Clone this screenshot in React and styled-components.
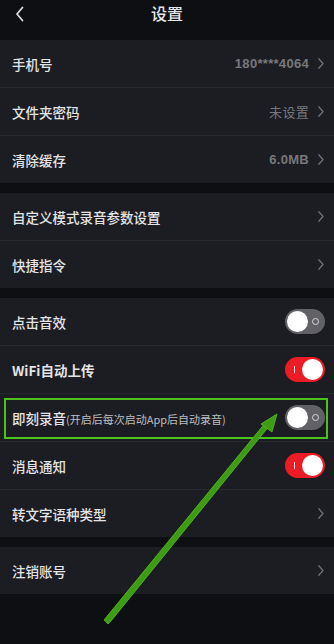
import React from "react";
import styled, { createGlobalStyle } from "styled-components";

const Global = createGlobalStyle`
  html, body { margin: 0; padding: 0; background: #0e0f13; }
  body { font-family: "Noto Sans CJK SC", "Noto Sans", sans-serif; -webkit-font-smoothing: antialiased; }
`;

const Page = styled.div`
  position: relative;
  width: 334px;
  height: 644px;
  background: #0e0f13;
  overflow: hidden;
  display: flex;
  flex-direction: column;
  gap: 10px;
`;

const Header = styled.div`
  position: relative;
  height: 40px;
  margin-bottom: -10px;
  display: flex;
  justify-content: center;
  align-items: flex-start;
  padding-top: 2px;
  box-sizing: border-box;
`;

const Back = styled.div`
  position: absolute;
  left: 15px;
  top: 6px;
  width: 10px;
  height: 16px;
  display: flex;
`;

const Title = styled.div`
  color: #e6e6e8;
  font-size: 16px;
  line-height: 22px;
  font-weight: 500;
`;

const Group = styled.div`
  background: #1c1d22;
  display: flex;
  flex-direction: column;
`;

const Row = styled.div`
  position: relative;
  height: 47px;
  display: flex;
  align-items: center;
  padding: 0 9px 0 12px;
  box-sizing: border-box;
  & + & { border-top: 1px solid #27282d; height: 48px; }
`;

const Label = styled.div`
  flex: 1;
  color: #e4e4e6;
  font-size: 13.5px;
  font-weight: ${(p) => (p.$bold ? 700 : 500)};
  white-space: nowrap;
`;

const Sub = styled.span`
  font-size: 11px;
  font-weight: 400;
  color: #bdbdc0;
`;

const Value = styled.div`
  color: #77787c;
  font-size: 13px;
  font-weight: ${(p) => (p.$bold ? 700 : 400)};
  font-family: ${(p) => (p.$bold ? '"Liberation Sans", "Noto Sans CJK SC", sans-serif' : '"Noto Sans CJK SC", sans-serif')};
  margin-right: 9px;
  letter-spacing: 0.3px;
`;

const Chev = styled.svg`
  width: 6px;
  height: 11px;
  margin-right: 1px;
  flex: none;
`;

const Toggle = styled.div`
  position: relative;
  width: 40px;
  height: 25px;
  border-radius: 13px;
  background: ${(p) => (p.$on ? "#ec1b24" : "#616166")};
  display: flex;
  align-items: center;
  justify-content: ${(p) => (p.$on ? "flex-end" : "flex-start")};
  padding: 0 2px;
  box-sizing: border-box;
  flex: none;
`;

const Knob = styled.div`
  width: 21px;
  height: 21px;
  border-radius: 50%;
  background: #ffffff;
`;

const OffMark = styled.div`
  position: absolute;
  right: 6px;
  top: 9px;
  width: 5px;
  height: 5px;
  border: 1.2px solid #d8d8da;
  border-radius: 50%;
`;

const OnMark = styled.div`
  position: absolute;
  left: 9px;
  top: 9px;
  width: 1px;
  height: 7px;
  background: #ffffff;
  opacity: 0.85;
`;

const Highlight = styled.div`
  position: absolute;
  left: 4px;
  right: 6px;
  top: 4px;
  bottom: 2px;
  border: 2px solid #4cc21c;
  pointer-events: none;
`;

const Overlay = styled.svg`
  position: absolute;
  left: 0;
  top: 0;
  width: 334px;
  height: 644px;
  pointer-events: none;
`;

const Chevron = () => (
  <Chev viewBox="0 0 6 11">
    <polyline points="0.8,0.8 5,5.5 0.8,10.2" fill="none" stroke="#6f7074" strokeWidth="1.3" strokeLinecap="round" strokeLinejoin="round" />
  </Chev>
);

const Switch = ({ on }) => (
  <Toggle $on={on}>
    {on ? <OnMark /> : <OffMark />}
    <Knob />
  </Toggle>
);

export default function App() {
  return (
    <>
      <Global />
      <Page>
        <Header>
          <Back>
            <svg width="10" height="16" viewBox="0 0 10 16">
              <polyline points="7.5,1.5 2,8 7.5,14.5" fill="none" stroke="#dcdcde" strokeWidth="1.8" strokeLinecap="round" strokeLinejoin="round" />
            </svg>
          </Back>
          <Title>设置</Title>
        </Header>

        <Group>
          <Row>
            <Label>手机号</Label>
            <Value $bold>180****4064</Value>
            <Chevron />
          </Row>
          <Row>
            <Label>文件夹密码</Label>
            <Value>未设置</Value>
            <Chevron />
          </Row>
          <Row>
            <Label>清除缓存</Label>
            <Value $bold>6.0MB</Value>
            <Chevron />
          </Row>
        </Group>

        <Group>
          <Row>
            <Label>自定义模式录音参数设置</Label>
            <Chevron />
          </Row>
          <Row>
            <Label>快捷指令</Label>
            <Chevron />
          </Row>
        </Group>

        <Group>
          <Row>
            <Label>点击音效</Label>
            <Switch on={false} />
          </Row>
          <Row>
            <Label $bold>WiFi自动上传</Label>
            <Switch on />
          </Row>
          <Row>
            <Label>
              即刻录音<Sub>(开启后每次启动App后自动录音)</Sub>
            </Label>
            <Switch on={false} />
            <Highlight />
          </Row>
          <Row>
            <Label>消息通知</Label>
            <Switch on />
          </Row>
          <Row>
            <Label>转文字语种类型</Label>
            <Chevron />
          </Row>
        </Group>

        <Group>
          <Row>
            <Label>注销账号</Label>
            <Chevron />
          </Row>
        </Group>

        <Overlay viewBox="0 0 334 644">
          <polygon
            points="104,620 108,624 111,621 270,425 266,422"
            fill="#3d9c14"
            stroke="#5bbf25"
            strokeWidth="0.8"
            strokeLinejoin="round"
          />
          <polygon points="261,424 277,414 272,432" fill="#3d9c14" stroke="#5bbf25" strokeWidth="0.8" strokeLinejoin="round" />
        </Overlay>
      </Page>
    </>
  );
}
